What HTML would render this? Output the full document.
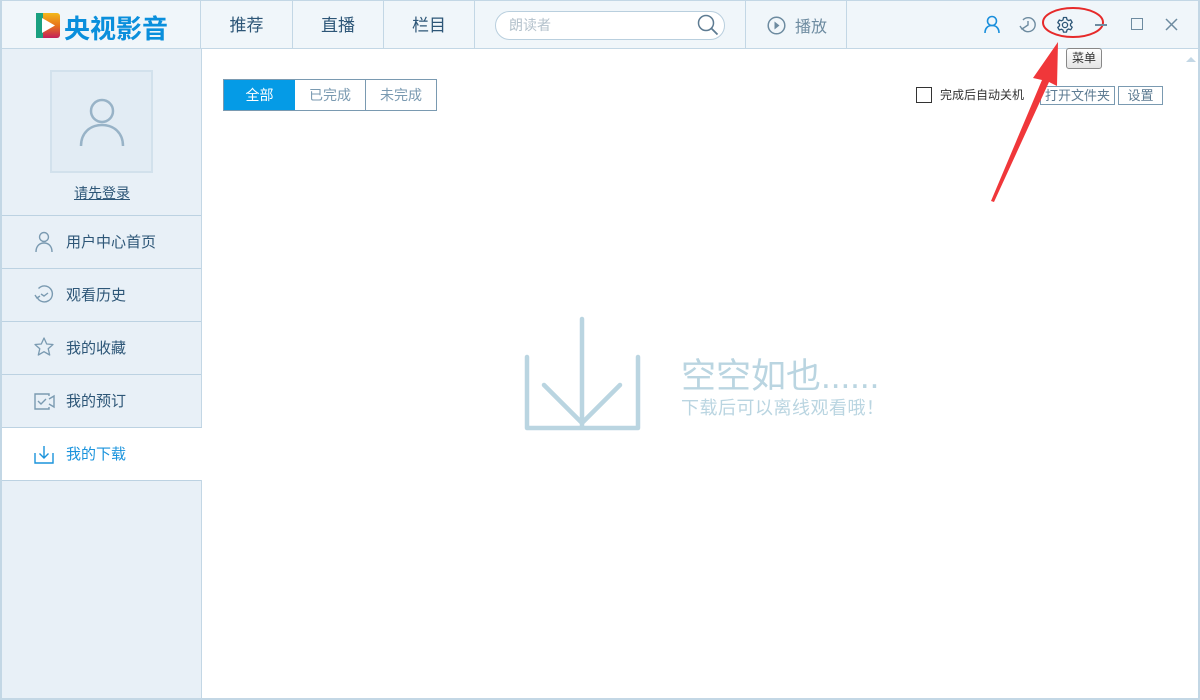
<!DOCTYPE html>
<html><head><meta charset="utf-8"><style>
*{margin:0;padding:0;box-sizing:border-box}
body{width:1200px;height:700px;overflow:hidden;background:#fff;font-family:"Liberation Sans","Noto Sans CJK SC",sans-serif;position:relative}
.abs{position:absolute}
.frame{left:0;top:0;width:1200px;height:700px;border:2px solid #c3d7e5;border-top:1px solid #c3d7e5}
.hdr{left:0;top:0;width:1200px;height:49px;background:#f0f6fa;border-bottom:1px solid #c3d7e5}
.tab{top:1px;height:48px;border-right:1px solid #c3d7e5;color:#2d5677;font-size:17px;text-align:center;line-height:50px}
.side{left:2px;top:49px;width:200px;height:649px;background:#e8f0f7;border-right:1px solid #c3d7e5}
.item{left:2px;width:199px;height:53px;border-top:1px solid #bcd2e2;font-size:15px;color:#2d5677;line-height:53px;padding-left:64px}
.ico{position:absolute;left:32px;top:15px}
</style></head><body>
<div class="abs hdr"></div>
<div class="abs" style="left:200px;top:1px;width:1px;height:48px;background:#c3d7e5"></div>
<svg class="abs" style="left:36px;top:13px" width="24" height="25" viewBox="0 0 24 25"><defs><linearGradient id="g" x1="0" y1="0" x2="0" y2="1"><stop offset="0" stop-color="#f2b81a"/><stop offset=".5" stop-color="#e8731c"/><stop offset="1" stop-color="#c21f5a"/></linearGradient></defs><rect x="0" y="0" width="24" height="25" rx="3" fill="url(#g)"/><path d="M0 0h7v25H0z" fill="#1aa080"/><path d="M6 5l13 7.5L6 20z" fill="#fff"/></svg>
<div class="abs" style="left:64px;top:9px;font-size:26px;font-weight:bold;color:#0a8fdc;letter-spacing:0px">央视影音</div>
<div class="abs tab" style="left:201px;width:92px">推荐</div>
<div class="abs tab" style="left:293px;width:91px">直播</div>
<div class="abs tab" style="left:384px;width:91px">栏目</div>
<div class="abs" style="left:495px;top:11px;width:230px;height:29px;border:1px solid #b9cfde;border-radius:15px;background:#fff;color:#b4c2cc;font-size:14px;line-height:27px;padding-left:13px">朗读者</div>
<svg class="abs" style="left:697px;top:14px" width="22" height="22" viewBox="0 0 22 22"><circle cx="9" cy="9" r="7.5" fill="none" stroke="#5d7b92" stroke-width="1.5"/><path d="M14.5 14.5l6 6" stroke="#5d7b92" stroke-width="1.8"/></svg>
<div class="abs" style="left:745px;top:1px;width:1px;height:48px;background:#c3d7e5"></div>
<div class="abs" style="left:846px;top:1px;width:1px;height:48px;background:#c3d7e5"></div>
<svg class="abs" style="left:767px;top:16px" width="19" height="19" viewBox="0 0 19 19"><circle cx="9.5" cy="9.5" r="8.3" fill="none" stroke="#6d8ba0" stroke-width="1.5"/><path d="M7.5 5.5l5 4-5 4z" fill="#6d8ba0"/></svg>
<div class="abs" style="left:795px;top:13px;font-size:16px;color:#6d8ba0">播放</div>
<svg class="abs" style="left:983px;top:15px" width="18" height="19" viewBox="0 0 18 19"><circle cx="9" cy="6" r="4.5" fill="none" stroke="#1a8fdc" stroke-width="1.6"/><path d="M2 18c0-5 3-7.5 7-7.5s7 2.5 7 7.5" fill="none" stroke="#1a8fdc" stroke-width="1.6"/></svg>
<svg class="abs" style="left:1019px;top:16px" width="18" height="18" viewBox="0 0 18 18"><path d="M3 12A7 7 0 1 0 4 4" fill="none" stroke="#6d8ba0" stroke-width="1.4"/><path d="M1 10l2 3 3-2" fill="none" stroke="#6d8ba0" stroke-width="1.4"/><path d="M9 5v4l-3 2" fill="none" stroke="#6d8ba0" stroke-width="1.4"/></svg>
<svg class="abs" style="left:1056px;top:16px" width="18" height="18" viewBox="0 0 18 18"><path d="M7.5 1.5h3l.5 2.2 1.6.9 2.1-.8 1.5 2.6-1.7 1.5v1.8l1.7 1.5-1.5 2.6-2.1-.8-1.6.9-.5 2.2h-3L7 14.1l-1.6-.9-2.1.8-1.5-2.6 1.7-1.5V8.1L1.8 6.6l1.5-2.6 2.1.8L7 3.9z" fill="none" stroke="#2d5677" stroke-width="1.3" stroke-linejoin="round"/><circle cx="9" cy="9" r="2.6" fill="none" stroke="#2d5677" stroke-width="1.3"/></svg>
<svg class="abs" style="left:1041px;top:6px" width="64" height="33" viewBox="0 0 64 33"><ellipse cx="32" cy="16.5" rx="30" ry="14.5" fill="none" stroke="#e62a2a" stroke-width="2"/></svg>
<div class="abs" style="left:1095px;top:24px;width:12px;height:1.5px;background:#6d8ba0"></div>
<div class="abs" style="left:1131px;top:18px;width:12px;height:12px;border:1.5px solid #6d8ba0"></div>
<svg class="abs" style="left:1165px;top:18px" width="13" height="13" viewBox="0 0 13 13"><path d="M1 1l11 11M12 1L1 12" stroke="#6d8ba0" stroke-width="1.5"/></svg>
<div class="abs side"></div>
<div class="abs" style="left:50px;top:70px;width:103px;height:103px;background:#e2ecf4;border:2px solid #d2e1ec"></div>
<svg class="abs" style="left:78px;top:96px" width="48" height="52" viewBox="0 0 48 52"><circle cx="24" cy="15" r="11" fill="none" stroke="#98b3c7" stroke-width="2.5"/><path d="M3 50c0-13 9-21 21-21s21 8 21 21" fill="none" stroke="#98b3c7" stroke-width="2.5"/></svg>
<div class="abs" style="left:74px;top:183px;font-size:14px;color:#2d5677;text-decoration:underline">请先登录</div>
<div class="abs item" style="top:215px"><svg class="ico" width="20" height="22" viewBox="0 0 20 22"><circle cx="10" cy="6" r="4.5" fill="none" stroke="#7a9ab1" stroke-width="1.4"/><path d="M2 21c0-6 3.5-9 8-9s8 3 8 9" fill="none" stroke="#7a9ab1" stroke-width="1.4"/></svg>用户中心首页</div>
<div class="abs item" style="top:268px"><svg class="ico" width="20" height="20" viewBox="0 0 20 20"><path d="M3 13A8 8 0 1 0 4.5 4.5" fill="none" stroke="#7a9ab1" stroke-width="1.4"/><path d="M1 11l2 3 3-2" fill="none" stroke="#7a9ab1" stroke-width="1.4"/><path d="M7 10l3 2 4-3" fill="none" stroke="#7a9ab1" stroke-width="1.4"/></svg>观看历史</div>
<div class="abs item" style="top:321px"><svg class="ico" width="20" height="20" viewBox="0 0 20 20"><path d="M10 1l2.7 6 6.3.5-4.8 4.2 1.5 6.3L10 14.7 4.3 18l1.5-6.3L1 7.5 7.3 7z" fill="none" stroke="#7a9ab1" stroke-width="1.3" stroke-linejoin="round"/></svg>我的收藏</div>
<div class="abs item" style="top:374px"><svg class="ico" width="21" height="18" viewBox="0 0 21 18" style="top:18px"><path d="M15 3V1H1v15h14v-2" fill="none" stroke="#7a9ab1" stroke-width="1.4"/><path d="M15 6l5-3v11l-5-3" fill="none" stroke="#7a9ab1" stroke-width="1.4"/><path d="M4 8l3 3 5-5" fill="none" stroke="#7a9ab1" stroke-width="1.4"/></svg>我的预订</div>
<div class="abs item" style="top:427px;background:#fff;color:#1a93dc;width:200px"><svg class="ico" width="20" height="19" viewBox="0 0 20 19" style="top:17px"><path d="M1 8v10h18V8" fill="none" stroke="#1a93dc" stroke-width="1.4"/><path d="M10 1v12M5.5 8.5l4.5 4.5 4.5-4.5" fill="none" stroke="#1a93dc" stroke-width="1.4"/></svg>我的下载</div>
<div class="abs" style="left:2px;top:480px;width:199px;height:1px;background:#bcd2e2"></div>
<div class="abs" style="left:223px;top:79px;width:214px;height:32px;border:1px solid #7a9ab1;display:flex;font-size:14px;line-height:30px;text-align:center;color:#7a9ab1">
<div style="width:71px;background:#059be6;color:#fff">全部</div><div style="width:71px;border-right:1px solid #7a9ab1">已完成</div><div style="width:70px">未完成</div></div>
<div class="abs" style="left:916px;top:87px;width:16px;height:16px;border:1.5px solid #333"></div>
<div class="abs" style="left:940px;top:86px;font-size:12px;color:#333">完成后自动关机</div>
<div class="abs" style="left:1040px;top:86px;width:75px;height:19px;border:1px solid #7a9ab1;font-size:13px;color:#5d7b92;text-align:center;line-height:17px">打开文件夹</div>
<div class="abs" style="left:1118px;top:86px;width:45px;height:19px;border:1px solid #7a9ab1;font-size:13px;color:#5d7b92;text-align:center;line-height:17px">设置</div>
<div class="abs" style="left:1066px;top:48px;width:36px;height:21px;border:1px solid #888;border-radius:3px;background:linear-gradient(#fff,#e4e4e4);font-size:12px;color:#333;text-align:center;line-height:19px">菜单</div>
<div class="abs" style="left:1186px;top:57px;width:0;height:0;border-left:5px solid transparent;border-right:5px solid transparent;border-bottom:5px solid #c3d7e5"></div>
<svg class="abs" style="left:520px;top:315px" width="125" height="120" viewBox="0 0 125 120"><path d="M7 42v71h111V42" fill="none" stroke="#bad5e1" stroke-width="4.5" stroke-linecap="round" stroke-linejoin="round"/><path d="M62 4v107M24 70l38 38 38-38" fill="none" stroke="#bad5e1" stroke-width="4.5" stroke-linecap="round" stroke-linejoin="round"/></svg>
<div class="abs" style="left:681px;top:348px;font-size:35px;color:#bad5e1">空空如也......</div>
<div class="abs" style="left:681px;top:394px;font-size:18px;color:#bad5e1;letter-spacing:0.5px">下载后可以离线观看哦！</div>
<svg class="abs" style="left:985px;top:38px" width="80" height="170" viewBox="0 0 80 170"><path d="M73 4L48 40l9 2L6 163l3 1L64 44l8 4z" fill="#f0373a"/></svg>
<div class="abs frame"></div>
</body></html>
